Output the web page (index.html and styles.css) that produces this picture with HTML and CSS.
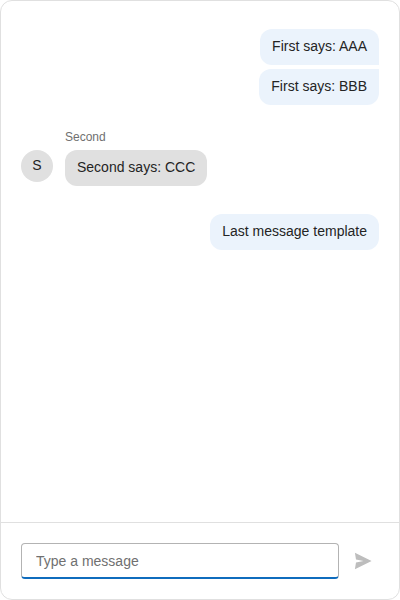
FILE: index.html
```html
<!DOCTYPE html>
<html lang="en">
<head>
<meta charset="utf-8">
<title>Chat</title>
<link rel="stylesheet" href="styles.css">
</head>
<body>
<main class="chat">
  <section class="messages">
    <div class="group own">
      <div class="bubble first">First says: AAA</div>
      <div class="bubble last">First says: BBB</div>
    </div>
    <div class="group other">
      <div class="avatar">S</div>
      <div class="content">
        <div class="author">Second</div>
        <div class="bubble">Second says: CCC</div>
      </div>
    </div>
    <div class="group own">
      <div class="bubble">Last message template</div>
    </div>
  </section>
  <form class="composer">
    <input class="field" type="text" placeholder="Type a message">
    <button class="send" type="button" aria-label="Send" disabled>
      <svg width="20" height="20" viewBox="0 0 20 20"><path d="M1.9 1.8 18.6 10 1.9 18.2 3 11.4 10.5 10 3 8.6Z"/></svg>
    </button>
  </form>
</main>
</body>
</html>
```

FILE: styles.css
```css
* {
  box-sizing: border-box;
}

body {
  margin: 0;
  background: #fff;
  color: #242424;
  font: 14px/20px "Liberation Sans", Arial, sans-serif;
}

.chat {
  display: flex;
  flex-direction: column;
  height: 600px;
  border: 1px solid #e0e0e0;
  border-radius: 12px;
}

.messages {
  display: flex;
  flex: 1;
  flex-direction: column;
  gap: 28px;
  padding: 28px 20px 0;
}

.group {
  display: flex;
}

.own {
  flex-direction: column;
  align-items: flex-end;
  gap: 4px;
}

.other {
  gap: 12px;
}

.bubble {
  height: 36px;
  padding: 7px 12px 9px;
  border-radius: 12px;
  background: #e0e0e0;
}

.own .bubble {
  background: #ebf3fc;
}

.own .first {
  border-bottom-right-radius: 0;
}

.own .last {
  border-top-right-radius: 0;
}

.avatar {
  align-self: flex-end;
  width: 32px;
  height: 32px;
  margin-bottom: 4px;
  border-radius: 50%;
  background: #e0e0e0;
  line-height: 31px;
  text-align: center;
}

.author {
  height: 17px;
  color: #707070;
  font-size: 12px;
  line-height: 8px;
}

.composer {
  display: flex;
  gap: 8px;
  height: 77px;
  padding: 20px 20px;
  border-top: 1px solid #e0e0e0;
}

.field {
  flex: 1;
  min-width: 0;
  height: 36px;
  padding: 0 14px;
  border: 1px solid #b3b3b3;
  border-bottom: 2px solid #0f6cbd;
  border-radius: 4px;
  outline: none;
  background: #fff;
  color: inherit;
  font: inherit;
}

.field::placeholder {
  color: #707070;
}

.send {
  display: flex;
  align-items: center;
  justify-content: center;
  width: 32px;
  height: 36px;
  padding: 0;
  border: 0;
  background: none;
}

.send svg {
  fill: #bdbdbd;
}
```
